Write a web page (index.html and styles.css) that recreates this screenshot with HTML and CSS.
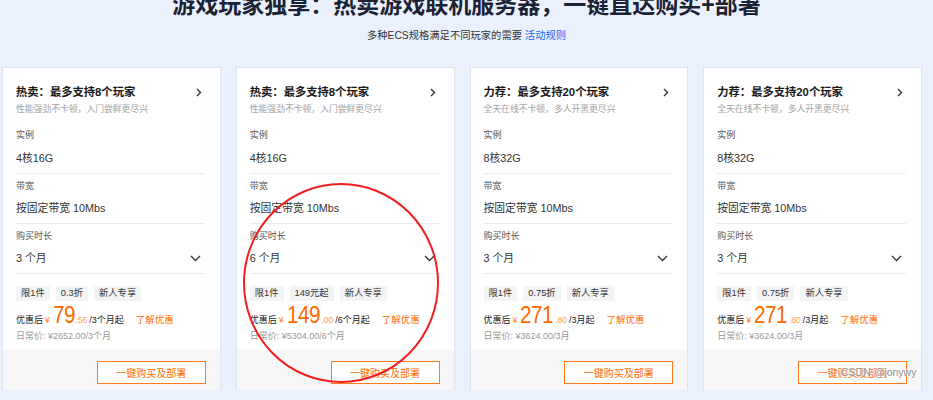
FILE: index.html
```html
<!DOCTYPE html>
<html lang="zh">
<head>
<meta charset="utf-8">
<link rel="stylesheet" href="styles.css">
</head>
<body>
<div class="page">
  <header class="hero">
    <h1 class="hero-title">游戏玩家独享：热卖游戏联机服务器，一键直达购买+部署</h1>
    <p class="hero-sub">多种ECS规格满足不同玩家的需要 <a class="hero-link">活动规则</a></p>
  </header>

  <section class="cards">
    <div class="card">
      <div class="card-body">
        <div class="card-head">
          <div class="card-title">热卖：最多支持8个玩家</div>
          <svg class="arrow" width="6" height="9" viewBox="0 0 6 9"><path d="M1 1l3.5 3.5L1 8" fill="none" stroke="#333" stroke-width="1.4"/></svg>
        </div>
        <div class="card-desc">性能强劲不卡顿，入门尝鲜更尽兴</div>
        <div class="field"><div class="label">实例</div><div class="value">4核16G</div></div>
        <div class="field"><div class="label">带宽</div><div class="value">按固定带宽 10Mbs</div></div>
        <div class="field"><div class="label">购买时长</div><div class="value select">3 个月<svg width="11" height="7" viewBox="0 0 11 7"><path d="M1 1l4.5 4.5L10 1" fill="none" stroke="#333" stroke-width="1.3"/></svg></div></div>
        <div class="tags"><span class="tag">限1件</span><span class="tag">0.3折</span><span class="tag">新人专享</span></div>
        <div class="price"><span class="p-lbl">优惠后</span><span class="p-yen">¥</span><span class="p-num">79</span><span class="p-dec">.56</span><span class="p-unit">/3个月起</span><a class="p-more">了解优惠</a></div>
        <div class="daily">日常价: ¥2652.00/3个月</div>
      </div>
      <div class="card-foot"><button class="buy">一键购买及部署</button></div>
    </div>

    <div class="card">
      <div class="card-body">
        <div class="card-head">
          <div class="card-title">热卖：最多支持8个玩家</div>
          <svg class="arrow" width="6" height="9" viewBox="0 0 6 9"><path d="M1 1l3.5 3.5L1 8" fill="none" stroke="#333" stroke-width="1.4"/></svg>
        </div>
        <div class="card-desc">性能强劲不卡顿，入门尝鲜更尽兴</div>
        <div class="field"><div class="label">实例</div><div class="value">4核16G</div></div>
        <div class="field"><div class="label">带宽</div><div class="value">按固定带宽 10Mbs</div></div>
        <div class="field"><div class="label">购买时长</div><div class="value select">6 个月<svg width="11" height="7" viewBox="0 0 11 7"><path d="M1 1l4.5 4.5L10 1" fill="none" stroke="#333" stroke-width="1.3"/></svg></div></div>
        <div class="tags"><span class="tag">限1件</span><span class="tag">149元起</span><span class="tag">新人专享</span></div>
        <div class="price"><span class="p-lbl">优惠后</span><span class="p-yen">¥</span><span class="p-num">149</span><span class="p-dec">.00</span><span class="p-unit">/6个月起</span><a class="p-more">了解优惠</a></div>
        <div class="daily">日常价: ¥5304.00/6个月</div>
      </div>
      <div class="card-foot"><button class="buy">一键购买及部署</button></div>
    </div>

    <div class="card">
      <div class="card-body">
        <div class="card-head">
          <div class="card-title">力荐：最多支持20个玩家</div>
          <svg class="arrow" width="6" height="9" viewBox="0 0 6 9"><path d="M1 1l3.5 3.5L1 8" fill="none" stroke="#333" stroke-width="1.4"/></svg>
        </div>
        <div class="card-desc">全天在线不卡顿，多人开黑更尽兴</div>
        <div class="field"><div class="label">实例</div><div class="value">8核32G</div></div>
        <div class="field"><div class="label">带宽</div><div class="value">按固定带宽 10Mbs</div></div>
        <div class="field"><div class="label">购买时长</div><div class="value select">3 个月<svg width="11" height="7" viewBox="0 0 11 7"><path d="M1 1l4.5 4.5L10 1" fill="none" stroke="#333" stroke-width="1.3"/></svg></div></div>
        <div class="tags"><span class="tag">限1件</span><span class="tag">0.75折</span><span class="tag">新人专享</span></div>
        <div class="price"><span class="p-lbl">优惠后</span><span class="p-yen">¥</span><span class="p-num">271</span><span class="p-dec">.80</span><span class="p-unit">/3月起</span><a class="p-more">了解优惠</a></div>
        <div class="daily">日常价: ¥3624.00/3月</div>
      </div>
      <div class="card-foot"><button class="buy">一键购买及部署</button></div>
    </div>

    <div class="card">
      <div class="card-body">
        <div class="card-head">
          <div class="card-title">力荐：最多支持20个玩家</div>
          <svg class="arrow" width="6" height="9" viewBox="0 0 6 9"><path d="M1 1l3.5 3.5L1 8" fill="none" stroke="#333" stroke-width="1.4"/></svg>
        </div>
        <div class="card-desc">全天在线不卡顿，多人开黑更尽兴</div>
        <div class="field"><div class="label">实例</div><div class="value">8核32G</div></div>
        <div class="field"><div class="label">带宽</div><div class="value">按固定带宽 10Mbs</div></div>
        <div class="field"><div class="label">购买时长</div><div class="value select">3 个月<svg width="11" height="7" viewBox="0 0 11 7"><path d="M1 1l4.5 4.5L10 1" fill="none" stroke="#333" stroke-width="1.3"/></svg></div></div>
        <div class="tags"><span class="tag">限1件</span><span class="tag">0.75折</span><span class="tag">新人专享</span></div>
        <div class="price"><span class="p-lbl">优惠后</span><span class="p-yen">¥</span><span class="p-num">271</span><span class="p-dec">.80</span><span class="p-unit">/3月起</span><a class="p-more">了解优惠</a></div>
        <div class="daily">日常价: ¥3624.00/3月</div>
      </div>
      <div class="card-foot"><button class="buy">一键购买及部署</button></div>
    </div>
  </section>

  <svg class="mark" width="210" height="210" viewBox="0 0 210 210"><ellipse cx="105" cy="103" rx="97" ry="99" fill="none" stroke="#f01e1e" stroke-width="2"/></svg>
  <div class="watermark">CSDN @jonywy</div>
</div>
</body>
</html>
```

FILE: styles.css
```css
* { box-sizing: border-box; }
html, body { margin: 0; padding: 0; }
body {
  background: #ebf1fc;
  font-family: "Liberation Sans", "Noto Sans CJK SC", sans-serif;
  color: #333;
  overflow: hidden;
}
.page { position: relative; width: 933px; height: 400px; }

.hero { text-align: center; }
.hero-title {
  margin: -10px 0 0;
  font-size: 23px;
  line-height: 30px;
  font-weight: 700;
  color: #1a2233;
}
.hero-sub {
  margin: 9px 0 0;
  font-size: 10.3px;
  line-height: 14px;
  color: #333;
}
.hero-link { color: #1b66f5; }

.cards {
  display: grid;
  grid-template-columns: repeat(4, minmax(0, 1fr));
  gap: 15px;
  margin: 24px 0 0 2px;
  width: 920px;
}
.card {
  background: #fff;
  border: 1px solid #dfe5ee;
  height: 330px;
  display: flex;
  flex-direction: column;
  min-width: 0;
}
.card-body { flex: 1; padding: 16px 15px 0 13px; }
.card-head { display: flex; align-items: center; justify-content: space-between; padding-right: 3px; }
.card-title { font-size: 11.3px; line-height: 16px; font-weight: 700; color: #181818; }
.card-desc { margin-top: 2px; font-size: 8.8px; line-height: 14px; color: #a3a3a3; }

.field { border-bottom: 1px solid #ebebeb; padding-bottom: 7px; margin-top: 5px; }
.card-desc + .field { margin-top: 12px; }
.label { font-size: 9px; line-height: 14px; color: #555; }
.value { margin-top: 7px; font-size: 10.8px; line-height: 16px; color: #333; }
.select { display: flex; align-items: center; justify-content: space-between; padding-right: 4px; }
.field:nth-of-type(3) .value { margin-top: 8px; }

.tags { display: flex; gap: 6px; margin-top: 12px; }
.tag {
  background: #f3f4f6;
  font-size: 9.3px;
  line-height: 15px;
  padding: 0 5px;
  color: #333;
}
.price {
  display: flex;
  align-items: baseline;
  margin-top: 2px;
  height: 25px;
  white-space: nowrap;
}
.p-lbl { font-size: 9px; color: #222; }
.p-yen { font-size: 8.5px; color: #ff7a22; margin: 0 3px 0 2px; }
.p-num { font-size: 23px; line-height: 25px; letter-spacing: -0.5px; color: #ff6a00; transform: scaleX(0.9); transform-origin: left; display: inline-block; margin-right: -4px; }
.p-dec { font-size: 8.5px; color: #ff9d59; margin-left: 2px; }
.p-unit { font-size: 9px; color: #222; margin-left: 2px; }
.p-more { font-size: 9.5px; color: #ff6a00; margin-left: 12px; }
.daily { margin-top: 1px; font-size: 9px; line-height: 14px; color: #999; }

.card-foot {
  height: 46px;
  background: #f7f7f7;
  display: flex;
  justify-content: flex-end;
  align-items: flex-start;
  padding: 11px 14px 0 0;
}
.buy {
  width: 109px;
  height: 23px;
  border: 1px solid #ff7a1f;
  background: #fff;
  color: #ff6a00;
  font-family: inherit;
  font-size: 10px;
  padding: 0;
}

.mark { position: absolute; left: 236px; top: 190px; }
.watermark {
  position: absolute;
  left: 841px;
  top: 376px;
  font-size: 10.5px;
  color: #8f8f8f;
  text-shadow: 0 0 2px #fff, 0 0 2px #fff;
}
```
